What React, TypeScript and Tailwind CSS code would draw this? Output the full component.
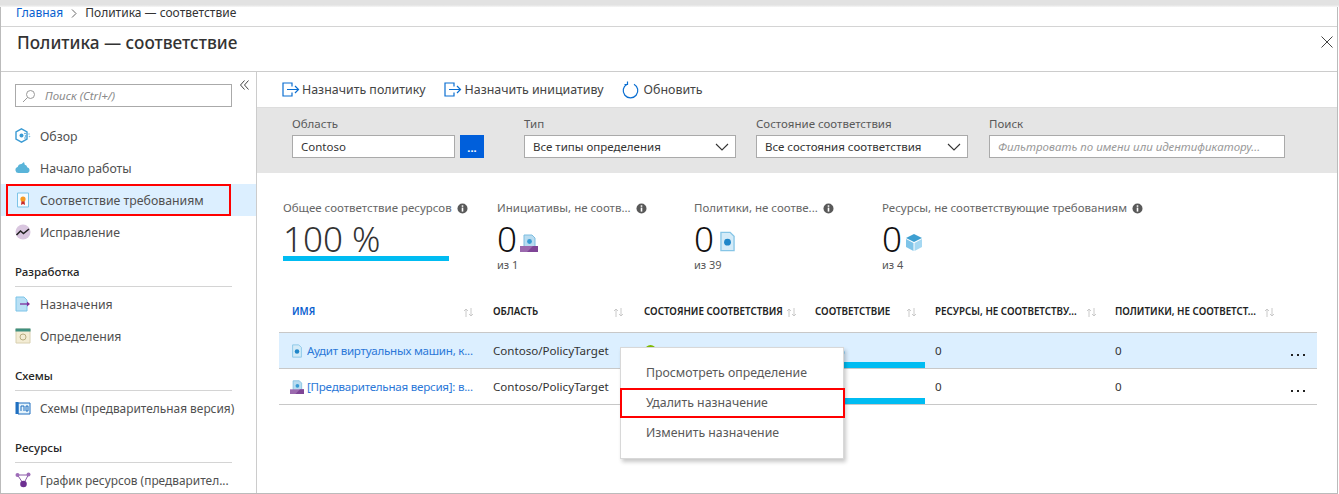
import type { ReactNode } from "react";

const font = "font-['Noto_Sans',sans-serif]";

function ExportIcon() {
  return (
    <svg width="18" height="16" viewBox="0 0 18 16" fill="none" stroke="#0a6ed1" strokeWidth="1.2">
      <path d="M10 4.5V1H1v13h9v-3.5" />
      <path d="M5 7.5h11.5M13 4l3.5 3.5L13 11" />
    </svg>
  );
}

function RefreshIcon() {
  return (
    <svg width="17" height="18" viewBox="0 0 17 18" fill="none" stroke="#0a6ed1" strokeWidth="1.2">
      <path d="M5 3.2a7.3 7.3 0 1 0 7 0" />
      <path d="M5.5 0.5v3h-3" />
    </svg>
  );
}

function Info() {
  return (
    <svg width="11" height="11" viewBox="0 0 11 11" className="shrink-0">
      <circle cx="5.5" cy="5.5" r="5" fill="#595959" />
      <rect x="4.7" y="4.6" width="1.6" height="4" fill="#fff" />
      <rect x="4.7" y="2.3" width="1.6" height="1.5" fill="#fff" />
    </svg>
  );
}

function Chevron() {
  return (
    <svg width="14" height="8" viewBox="0 0 14 8" fill="none" stroke="#333" strokeWidth="1.1">
      <path d="M1 1l6 6 6-6" />
    </svg>
  );
}

function SortArrows() {
  return (
    <svg width="11" height="9" viewBox="0 0 11 9" fill="none" stroke="#c4c4c4" strokeWidth="0.9" className="shrink-0">
      <path d="M3 9V1M1 3l2-2 2 2M8 0v8M6 6l2 2 2-2" />
    </svg>
  );
}

function PolicyDoc({ size = 16 }: { size?: number }) {
  return (
    <svg width={size} height={size} viewBox="0 0 16 16">
      <path d="M3 1h7l3 3v11H3z" fill="#d4ebf8" stroke="#86c5e6" />
      <circle cx="8" cy="8.5" r="2.6" fill="#1f86c9" />
    </svg>
  );
}

function InitiativeIcon({ size = 18 }: { size?: number }) {
  return (
    <svg width={size} height={size} viewBox="0 0 18 18">
      <path d="M4 1h8l3 3v10H4z" fill="#b9dcf0" stroke="#7dbde0" />
      <circle cx="9.5" cy="7.5" r="2.4" fill="#3a9bd4" />
      <path d="M0 12h18v6H0z" fill="#9b69ae" />
      <path d="M7 18l6-6h5v6z" fill="#7f4596" />
    </svg>
  );
}

function NavIcon({ name }: { name: string }) {
  if (name === "overview")
    return (
      <svg width="16" height="16" viewBox="0 0 16 16">
        <path d="M6.5 0.8l5.5 3v7.4l-5.5 3-5.5-3V3.8z" fill="none" stroke="#3a9bd4" strokeWidth="1.4" />
        <circle cx="6.5" cy="7.5" r="2" fill="#3a9bd4" />
        <circle cx="10" cy="5.5" r="0.8" fill="#3a9bd4" />
        <circle cx="10.5" cy="8" r="0.8" fill="#3a9bd4" />
        <circle cx="10" cy="10" r="0.8" fill="#3a9bd4" />
        <circle cx="14" cy="6" r="0.8" fill="#7dbde0" />
        <circle cx="14.5" cy="8.5" r="0.8" fill="#7dbde0" />
      </svg>
    );
  if (name === "start")
    return (
      <svg width="16" height="16" viewBox="0 0 16 16">
        <path d="M3.5 13a3 3 0 0 1-.8-5.9A4 4 0 0 1 6.5 4L9 2l.8 2.8a3 3 0 0 1 2.4 2.4 3 3 0 0 1 .3 5.8z" fill="#59b4d9" />
      </svg>
    );
  if (name === "compliance")
    return (
      <svg width="16" height="16" viewBox="0 0 16 16">
        <path d="M2.5 1h11v14h-11z" fill="#f4fbff" stroke="#7dc4e8" />
        <path d="M6.5 9l-.5 4 2-1 2 1-.5-4z" fill="#c92a2a" />
        <circle cx="8" cy="7" r="2.6" fill="#f59a23" />
      </svg>
    );
  if (name === "fix")
    return (
      <svg width="16" height="16" viewBox="0 0 16 16">
        <circle cx="8" cy="8" r="7.5" fill="#d9c6df" />
        <path d="M1.5 11l4-4 3 2.5L14 5" fill="none" stroke="#222" strokeWidth="1.6" />
      </svg>
    );
  if (name === "assign")
    return (
      <svg width="16" height="16" viewBox="0 0 16 16">
        <path d="M1 1h8l3 3v11H1z" fill="#b9e0f5" stroke="#7dc4e8" />
        <path d="M5 8h9" stroke="#7f2f9b" strokeWidth="1.3" />
        <path d="M12 5.5L15 8l-3 2.5z" fill="#7f2f9b" />
      </svg>
    );
  if (name === "define")
    return (
      <svg width="16" height="16" viewBox="0 0 16 16">
        <path d="M1 1h14v14H1z" fill="#f3ecd4" stroke="#d8d0b0" />
        <path d="M0.5 0.5h15v3h-15z" fill="#3f8f7f" />
        <circle cx="8" cy="9" r="3" fill="none" stroke="#b8ad80" />
      </svg>
    );
  if (name === "blueprint")
    return (
      <svg width="16" height="16" viewBox="0 0 16 16">
        <path d="M3 3h12v11H3z" fill="#e5f3fb" stroke="#1f6fc0" />
        <path d="M0.5 2h3v12h-3z" fill="#1f6fc0" />
        <path d="M6 11V6h3v5M11 6h2v5h-2z" fill="none" stroke="#1f6fc0" />
      </svg>
    );
  return (
    <svg width="16" height="16" viewBox="0 0 16 16">
      <path d="M2.5 3l6 9M13.5 2.5l-5 9.5M2.5 3h11" fill="none" stroke="#8a5aa8" strokeWidth="1" />
      <circle cx="2.5" cy="3" r="2" fill="#9e6cb8" />
      <circle cx="13.5" cy="2.5" r="2" fill="#9e6cb8" />
      <circle cx="8.5" cy="12" r="3.3" fill="#6d2f91" />
    </svg>
  );
}

function NavItem({ icon, small, children }: { icon: string; small?: boolean; children: ReactNode }) {
  return (
    <div className="flex h-8 items-center pl-[14px]">
      <span className="flex w-[25px] shrink-0">
        <NavIcon name={icon} />
      </span>
      <span className={`whitespace-nowrap pt-[2px] text-[#505050] ${small ? "text-[11.9px]" : ""}`}>{children}</span>
    </div>
  );
}

function NavSection({ title, children }: { title: string; children: ReactNode }) {
  return (
    <div className="pt-[16px]">
      <div className="ml-[14px] mr-[24px] flex h-[23px] items-start border-b border-[#d4d4d4] text-[11.5px] font-medium leading-[16px] text-[#262626]">
        {title}
      </div>
      <div className="pt-[1px]">{children}</div>
    </div>
  );
}

function Sidebar() {
  return (
    <aside className="relative w-[256px] shrink-0 border-r border-[#ccc] pt-[12px]">
      <button className="absolute right-[7px] top-[8px]">
        <svg width="9" height="10" viewBox="0 0 9 10" fill="none" stroke="#444" className="block">
          <path d="M4.5.5L.5 5l4 4.5M8.5.5L4.5 5l4 4.5" />
        </svg>
      </button>
      <div className="ml-[14px] flex h-[23px] w-[217px] items-center border border-[#aaa] pl-[6px]">
        <svg width="14" height="14" viewBox="0 0 14 14" fill="none" stroke="#999" strokeWidth="1">
          <circle cx="8.5" cy="5.5" r="4" />
          <path d="M5.5 8.5L1 13" />
        </svg>
        <span className="ml-[9px] text-[11.5px] italic text-[#8a8a8a]">Поиск (Ctrl+/)</span>
      </div>
      <div className="pt-[13px]">
        <NavItem icon="overview">Обзор</NavItem>
        <NavItem icon="start">Начало работы</NavItem>
        <div className="bg-[#dcefff] pl-[5px] pr-[25px]">
          <div className="flex h-8 items-center border-2 border-[#f00] pl-[7px]">
            <span className="flex w-[25px] shrink-0">
              <NavIcon name="compliance" />
            </span>
            <span className="truncate pt-[2px] text-[#505050]">Соответствие требованиям</span>
          </div>
        </div>
        <NavItem icon="fix">Исправление</NavItem>
      </div>
      <NavSection title="Разработка">
        <NavItem icon="assign">Назначения</NavItem>
        <NavItem icon="define">Определения</NavItem>
      </NavSection>
      <NavSection title="Схемы">
        <NavItem icon="blueprint" small>
          Схемы (предварительная версия)
        </NavItem>
      </NavSection>
      <NavSection title="Ресурсы">
        <NavItem icon="graph" small>
          График ресурсов (предварител...
        </NavItem>
      </NavSection>
    </aside>
  );
}

function Field({ label, width, children }: { label: string; width: string; children: ReactNode }) {
  return (
    <div className={width}>
      <div className="h-[27px] pt-[8px] text-[11.5px] leading-[16px] text-[#595959]">{label}</div>
      {children}
    </div>
  );
}

function SelectBox({ value }: { value: string }) {
  return (
    <div className="flex h-[23px] items-center justify-between border border-[#aaa] bg-white pl-[8px] pr-[6px] text-[11.5px] text-[#333]">
      <span>{value}</span>
      <Chevron />
    </div>
  );
}

function Metric({
  title,
  value,
  sub,
  icon,
  width,
}: {
  title: string;
  value: string;
  sub: string;
  icon: ReactNode;
  width: string;
}) {
  return (
    <div className={width}>
      <div className="flex h-[16px] items-center gap-[5px] text-[11.5px] text-[#666]">
        <span>{title}</span>
        <Info />
      </div>
      <div className="mt-[3px] flex h-[40px] items-end gap-[3px]">
        <div className="text-[35px] font-light leading-[40px] text-[#111]">{value}</div>
        <span className="mb-[7px] flex">{icon}</span>
      </div>
      <div className="-mt-[1px] text-[11px] leading-[14px] text-[#555]">{sub}</div>
    </div>
  );
}

const columns = [
  { title: "ИМЯ", width: "w-[201px]", pr: "pr-[19px]", active: true },
  { title: "ОБЛАСТЬ", width: "w-[151px]", pr: "pr-[20px]", active: false },
  { title: "СОСТОЯНИЕ СООТВЕТСТВИЯ", width: "w-[171px]", pr: "pr-[18px]", active: false },
  { title: "СООТВЕТСТВИЕ", width: "w-[120px]", pr: "pr-[18px]", active: false },
  { title: "РЕСУРСЫ, НЕ СООТВЕТСТВУ...", width: "w-[180px]", pr: "pr-[18px]", active: false },
  { title: "ПОЛИТИКИ, НЕ СООТВЕТСТ...", width: "w-[202px]", pr: "pr-[42px]", active: false },
];

function Row({ icon, name, selected }: { icon: ReactNode; name: string; selected?: boolean }) {
  return (
    <div className={`flex h-[36px] border-b border-[#c8c8c8] ${selected ? "bg-[#dcefff]" : ""}`}>
      <div className="flex w-[214px] items-start pl-[7px] pt-[9px]">
        <span className="flex h-[18px] w-[21px] shrink-0 items-center justify-center">{icon}</span>
        <span className="truncate text-[11.6px] leading-[18px] tracking-[-0.25px] text-[#2b78d8]">{name}</span>
      </div>
      <div className="w-[151px] pt-[9px] text-[11.6px] leading-[18px] text-[#333]">Contoso/PolicyTarget</div>
      <div className="flex w-[171px] items-start gap-[5px] pl-[1px] pt-[9px] text-[11.6px] leading-[18px] text-[#333]">
        <span className="mt-[3px] h-[11px] w-[11px] rounded-full bg-[#7fba00]" />
        {selected ? "Соответствует" : null}
      </div>
      <div className="relative flex w-[120px] items-end">
        {selected ? <span className="absolute left-0 top-[9px] text-[11.6px] leading-[18px] text-[#333]">100%</span> : null}
        <div className="h-[6px] w-[110px] bg-[#00bcf2]" />
      </div>
      <div className="w-[180px] pt-[9px] text-[11.6px] leading-[18px] text-[#333]">0</div>
      <div className="relative w-[202px] pt-[9px] text-[11.6px] leading-[18px] text-[#333]">
        0
        <span className="absolute right-[12px] top-[21px] flex gap-[4px]">
          <i className="h-[2px] w-[2px] bg-[#222]" />
          <i className="h-[2px] w-[2px] bg-[#222]" />
          <i className="h-[2px] w-[2px] bg-[#222]" />
        </span>
      </div>
    </div>
  );
}

function ContextMenu() {
  return (
    <div className="absolute left-[620px] top-[347px] h-[112px] w-[224px] border border-[#d8d8d8] bg-white pt-[10px] text-[12.3px] text-[#595959] shadow-[2px_3px_4px_rgba(0,0,0,0.22)]">
      <div className="flex h-[30px] items-center pl-[25px]">Просмотреть определение</div>
      <div className="-ml-[1px] -mr-[2px] flex h-[30px] items-center border-2 border-[#f00] pl-[24px]">Удалить назначение</div>
      <div className="flex h-[30px] items-center pl-[25px]">Изменить назначение</div>
    </div>
  );
}

export default function App() {
  return (
    <div className={`relative flex h-[494px] w-[1339px] flex-col overflow-hidden bg-white text-[12.3px] ${font}`}>
      <div className="h-[7px] shrink-0 bg-[linear-gradient(#e2e2e2_70%,#f6f6f6)]" />
      <div className="mr-[1px] flex min-h-0 flex-1 flex-col border-b border-l border-r border-[#bbb]">
        <div className="flex h-[20px] shrink-0 items-center border-b border-[#d4d4d4] pb-[7px] pl-[15px] text-[12px] text-[#333]">
          <span className="text-[#0a5fd0]">Главная</span>
          <svg width="6" height="9" viewBox="0 0 6 9" fill="none" stroke="#666" className="mx-[8px]">
            <path d="M1 .5l4 4-4 4" />
          </svg>
          <span>Политика — соответствие</span>
        </div>
        <header className="flex h-[45px] shrink-0 items-start justify-between border-b border-[#ccc] pl-[16px] pr-[4px]">
          <h1 className="pt-[4px] text-[17.2px] font-medium leading-[24px] text-[#333]">Политика — соответствие</h1>
          <svg width="12" height="12" viewBox="0 0 12 12" stroke="#444" className="mt-[9px]">
            <path d="M.5.5l11 11M11.5.5l-11 11" />
          </svg>
        </header>
        <div className="flex min-h-0 flex-1">
          <Sidebar />
          <main className="min-w-0 flex-1">
            <div className="flex h-[36px] items-center gap-[18px] border-b border-[#ddd] pl-[25px] pt-[2px] text-[12.4px] text-[#444]">
              <span className="flex items-center gap-[2px]">
                <ExportIcon />
                Назначить политику
              </span>
              <span className="flex items-center gap-[3px]">
                <ExportIcon />
                Назначить инициативу
              </span>
              <span className="flex items-center gap-[5px]">
                <RefreshIcon />
                Обновить
              </span>
            </div>
            <div className="flex h-[65px] bg-[#e5e5e5] pl-[35px]">
              <Field label="Область" width="w-[192px]">
                <div className="flex gap-[5px]">
                  <div className="flex h-[23px] w-[163px] items-center border border-[#aaa] bg-white pl-[8px] text-[11.5px] text-[#333]">
                    Contoso
                  </div>
                  <button className="h-[23px] w-[24px] bg-[#005fdb] pt-[3px] text-[11px] font-bold leading-[14px] text-white">...</button>
                </div>
              </Field>
              <div className="w-[40px]" />
              <Field label="Тип" width="w-[212px]">
                <SelectBox value="Все типы определения" />
              </Field>
              <div className="w-[20px]" />
              <Field label="Состояние соответствия" width="w-[212px]">
                <SelectBox value="Все состояния соответствия" />
              </Field>
              <div className="w-[21px]" />
              <Field label="Поиск" width="w-[296px]">
                <div className="flex h-[23px] items-center border border-[#aaa] bg-white pl-[8px] text-[11.5px] italic text-[#999]">
                  Фильтровать по имени или идентификатору...
                </div>
              </Field>
            </div>
            <div className="flex pl-[26px] pt-[27px]">
              <div className="w-[214px]">
                <div className="flex h-[16px] items-center gap-[5px] text-[11.5px] text-[#666]">
                  <span>Общее соответствие ресурсов</span>
                  <Info />
                </div>
                <div className="mt-[3px] h-[37px] text-[35px] font-light leading-[40px] text-[#333]">100 %</div>
                <div className="h-[5px] w-[166px] bg-[#00bcf2]" />
              </div>
              <Metric title="Инициативы, не соотв..." value="0" sub="из 1" icon={<InitiativeIcon />} width="w-[197px]" />
              <Metric title="Политики, не соотве..." value="0" sub="из 39" icon={<PolicyDoc size={21} />} width="w-[188px]" />
              <Metric
                title="Ресурсы, не соответствующие требованиям"
                value="0"
                sub="из 4"
                width="w-[280px]"
                icon={
                  <svg width="18" height="19" viewBox="0 0 18 19">
                    <path d="M9 1l8 4-8 4-8-4z" fill="#3e9fd1" />
                    <path d="M1 6l7.5 4v8L1 14z" fill="#7fc4e8" />
                    <path d="M17 6l-7.5 4v8l7.5-4z" fill="#a5d8f2" />
                  </svg>
                }
              />
            </div>
            <div className="ml-[22px] mr-[20px] mt-[22px]">
              <div className="flex h-[39px] items-center border-b border-[#c8c8c8] pb-[1px] pl-[13px]">
                {columns.map((col) => (
                  <div key={col.title} className={`flex items-center justify-between ${col.width} ${col.pr}`}>
                    <span className={`whitespace-nowrap text-[9.8px] font-semibold ${col.active ? "text-[#0a5fd0]" : "text-[#222]"}`}>
                      {col.title}
                    </span>
                    <SortArrows />
                  </div>
                ))}
              </div>
              <Row selected icon={<PolicyDoc size={14} />} name="Аудит виртуальных машин, к..." />
              <Row icon={<InitiativeIcon size={14} />} name="[Предварительная версия]: в..." />
            </div>
          </main>
        </div>
      </div>
      <ContextMenu />
    </div>
  );
}
